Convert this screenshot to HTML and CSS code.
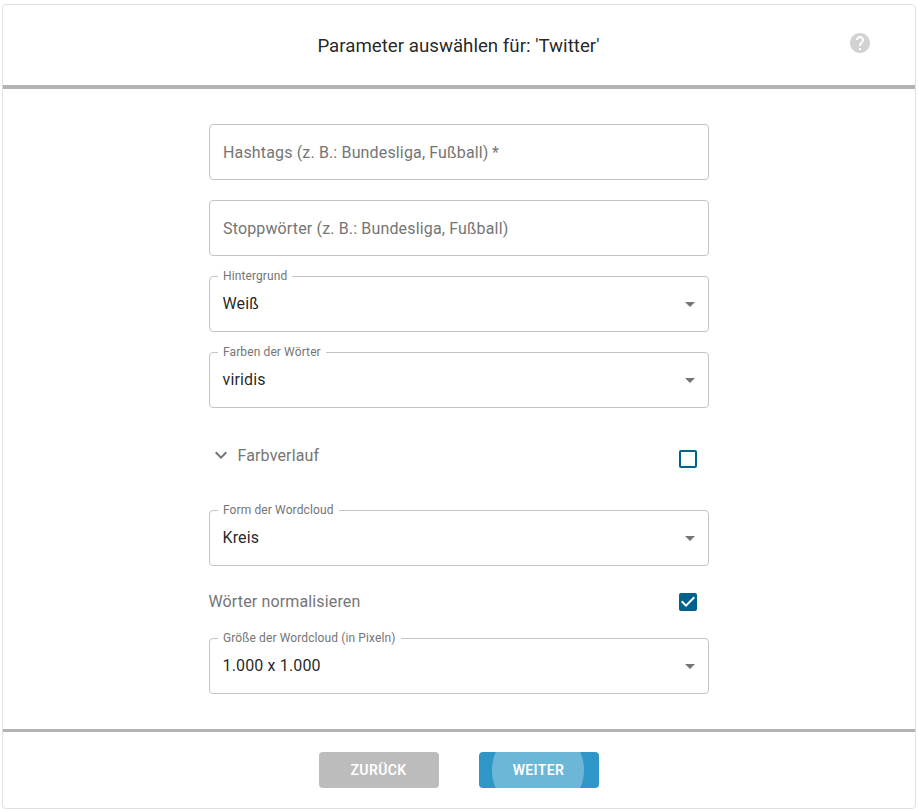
FILE: index.html
```html
<!DOCTYPE html>
<html lang="de">
<head>
<meta charset="utf-8">
<title>Parameter auswählen</title>
<link rel="stylesheet" href="styles.css">
</head>
<body>
<main class="card">
  <header class="card-header">
    <h1 class="title">Parameter auswählen für: 'Twitter'</h1>
    <svg class="help" viewBox="0 0 24 24"><path d="M12 2C6.480 2 2 6.480 2 12s4.480 10 10 10 10-4.480 10-10S17.520 2 12 2zm1 17h-2v-2h2v2zm2.070-7.750l-.9.920C13.450 12.900 13 13.500 13 15h-2v-.5c0-1.100.450-2.100 1.170-2.830l1.240-1.260c.370-.360.590-.860.590-1.410 0-1.100-.9-2-2-2s-2 .9-2 2H8c0-2.210 1.790-4 4-4s4 1.790 4 4c0 .880-.360 1.680-.930 2.250z"/></svg>
  </header>
  <form class="content">
    <div class="field"><span class="placeholder">Hashtags (z. B.: Bundesliga, Fußball)<span class="star">*</span></span></div>
    <div class="field"><span class="placeholder">Stoppwörter (z. B.: Bundesliga, Fußball)</span></div>
    <div class="field">
      <label class="label">Hintergrund</label><span class="value">Weiß</span>
      <svg class="arrow" viewBox="0 0 24 24"><path d="M7 10l5 5 5-5z"/></svg>
    </div>
    <div class="field">
      <label class="label">Farben der Wörter</label><span class="value">viridis</span>
      <svg class="arrow" viewBox="0 0 24 24"><path d="M7 10l5 5 5-5z"/></svg>
    </div>
    <div class="row gradient-row">
      <span class="expander"><svg class="chevron" viewBox="0 0 24 24"><path d="M16.590 8.590L12 13.170 7.410 8.590 6 10l6 6 6-6z"/></svg>Farbverlauf</span>
      <svg class="checkbox" viewBox="0 0 24 24"><path d="M19 5v14H5V5h14m0-2H5c-1.100 0-2 .9-2 2v14c0 1.100.9 2 2 2h14c1.100 0 2-.9 2-2V5c0-1.100-.9-2-2-2z"/></svg>
    </div>
    <div class="field">
      <label class="label">Form der Wordcloud</label><span class="value">Kreis</span>
      <svg class="arrow" viewBox="0 0 24 24"><path d="M7 10l5 5 5-5z"/></svg>
    </div>
    <div class="row normalize-row">
      <span class="row-text">Wörter normalisieren</span>
      <svg class="checkbox" viewBox="0 0 24 24"><path d="M19 3H5c-1.110 0-2 .9-2 2v14c0 1.100.890 2 2 2h14c1.110 0 2-.9 2-2V5c0-1.100-.890-2-2-2zm-9 14l-5-5 1.410-1.410L10 14.170l7.590-7.590L19 8l-9 9z"/></svg>
    </div>
    <div class="field">
      <label class="label">Größe der Wordcloud (in Pixeln)</label><span class="value">1.000 x 1.000</span>
      <svg class="arrow" viewBox="0 0 24 24"><path d="M7 10l5 5 5-5z"/></svg>
    </div>
  </form>
  <footer class="card-footer">
    <button class="button back" type="button">ZURÜCK</button>
    <button class="button next" type="button"><span class="ripple"></span><span class="button-text">WEITER</span></button>
  </footer>
</main>
</body>
</html>
```
FILE: styles.css
```css
* { box-sizing: border-box; }
body {
  margin: 0;
  padding: 4px 3px 3px 2px;
  background: #fff;
  font-family: Roboto, "Liberation Sans", sans-serif;
  font-size: 16px;
  overflow: hidden;
}
.card {
  height: 805px;
  display: flex;
  flex-direction: column;
  border: 1px solid #e0e0e0;
  border-radius: 4px;
}
.card-header {
  height: 84px;
  display: grid;
  grid-template-columns: 1fr auto 1fr;
  align-items: center;
  border-bottom: 4px solid #b2b2b2;
}
.title {
  grid-column: 2;
  margin: 2px 1px 0 0;
  font-size: 18.72px;
  font-weight: 400;
  line-height: 24px;
  color: rgba(0, 0, 0, .87);
}
.help {
  width: 24px;
  height: 24px;
  margin: 0 43px 4px 0;
  justify-self: end;
  fill: #d2d2d2;
}
.content {
  width: 500px;
  margin: 35px auto;
  display: flex;
  flex-direction: column;
  gap: 20px;
}
.field {
  position: relative;
  height: 56px;
  padding: 0 6px 0 13px;
  display: flex;
  align-items: center;
  justify-content: space-between;
  border: 1px solid #c4c4c4;
  border-radius: 4px;
  letter-spacing: .15px;
}
.placeholder { color: #757575; }
.star { margin-left: 3.5px; }
.value {
  margin: 0 0 2px -.5px;
  color: rgba(0, 0, 0, .87);
}
.label {
  position: absolute;
  top: -9px;
  left: 8px;
  padding: 0 5px;
  background: #fff;
  color: #757575;
  font-size: 12px;
  line-height: 16px;
  letter-spacing: .11px;
}
.arrow {
  width: 24px;
  height: 24px;
  fill: #757575;
}
.row {
  display: flex;
  align-items: center;
  justify-content: space-between;
  padding-right: 9px;
  color: #757575;
  letter-spacing: .14px;
}
.gradient-row { height: 62px; }
.normalize-row {
  height: 72px;
  margin: -20px 0;
}
.expander {
  display: flex;
  align-items: center;
  margin-bottom: 8px;
  gap: 4.5px;
}
.row-text { margin: 0 0 2px -.5px; }
.chevron {
  width: 24px;
  height: 24px;
  fill: #757575;
}
.checkbox {
  width: 24px;
  height: 24px;
  fill: #00618f;
}
.card-footer {
  flex: 1;
  display: flex;
  justify-content: center;
  align-items: flex-start;
  gap: 40px;
  padding-top: 20px;
  border-top: 3px solid #b2b2b2;
}
.button {
  position: relative;
  width: 120px;
  height: 36px;
  padding: 0 1px 0 0;
  overflow: hidden;
  border: 0;
  border-radius: 4px;
  color: #fff;
  font: 600 14px/24px Roboto, "Liberation Sans", sans-serif;
  letter-spacing: .38px;
}
.back { background: #bcbcbc; }
.next { background: #2e97c7; }
.ripple {
  position: absolute;
  width: 92px;
  height: 92px;
  left: 13px;
  top: -28px;
  border-radius: 50%;
  background: #6cb6d8;
}
.button-text { position: relative; }
```
